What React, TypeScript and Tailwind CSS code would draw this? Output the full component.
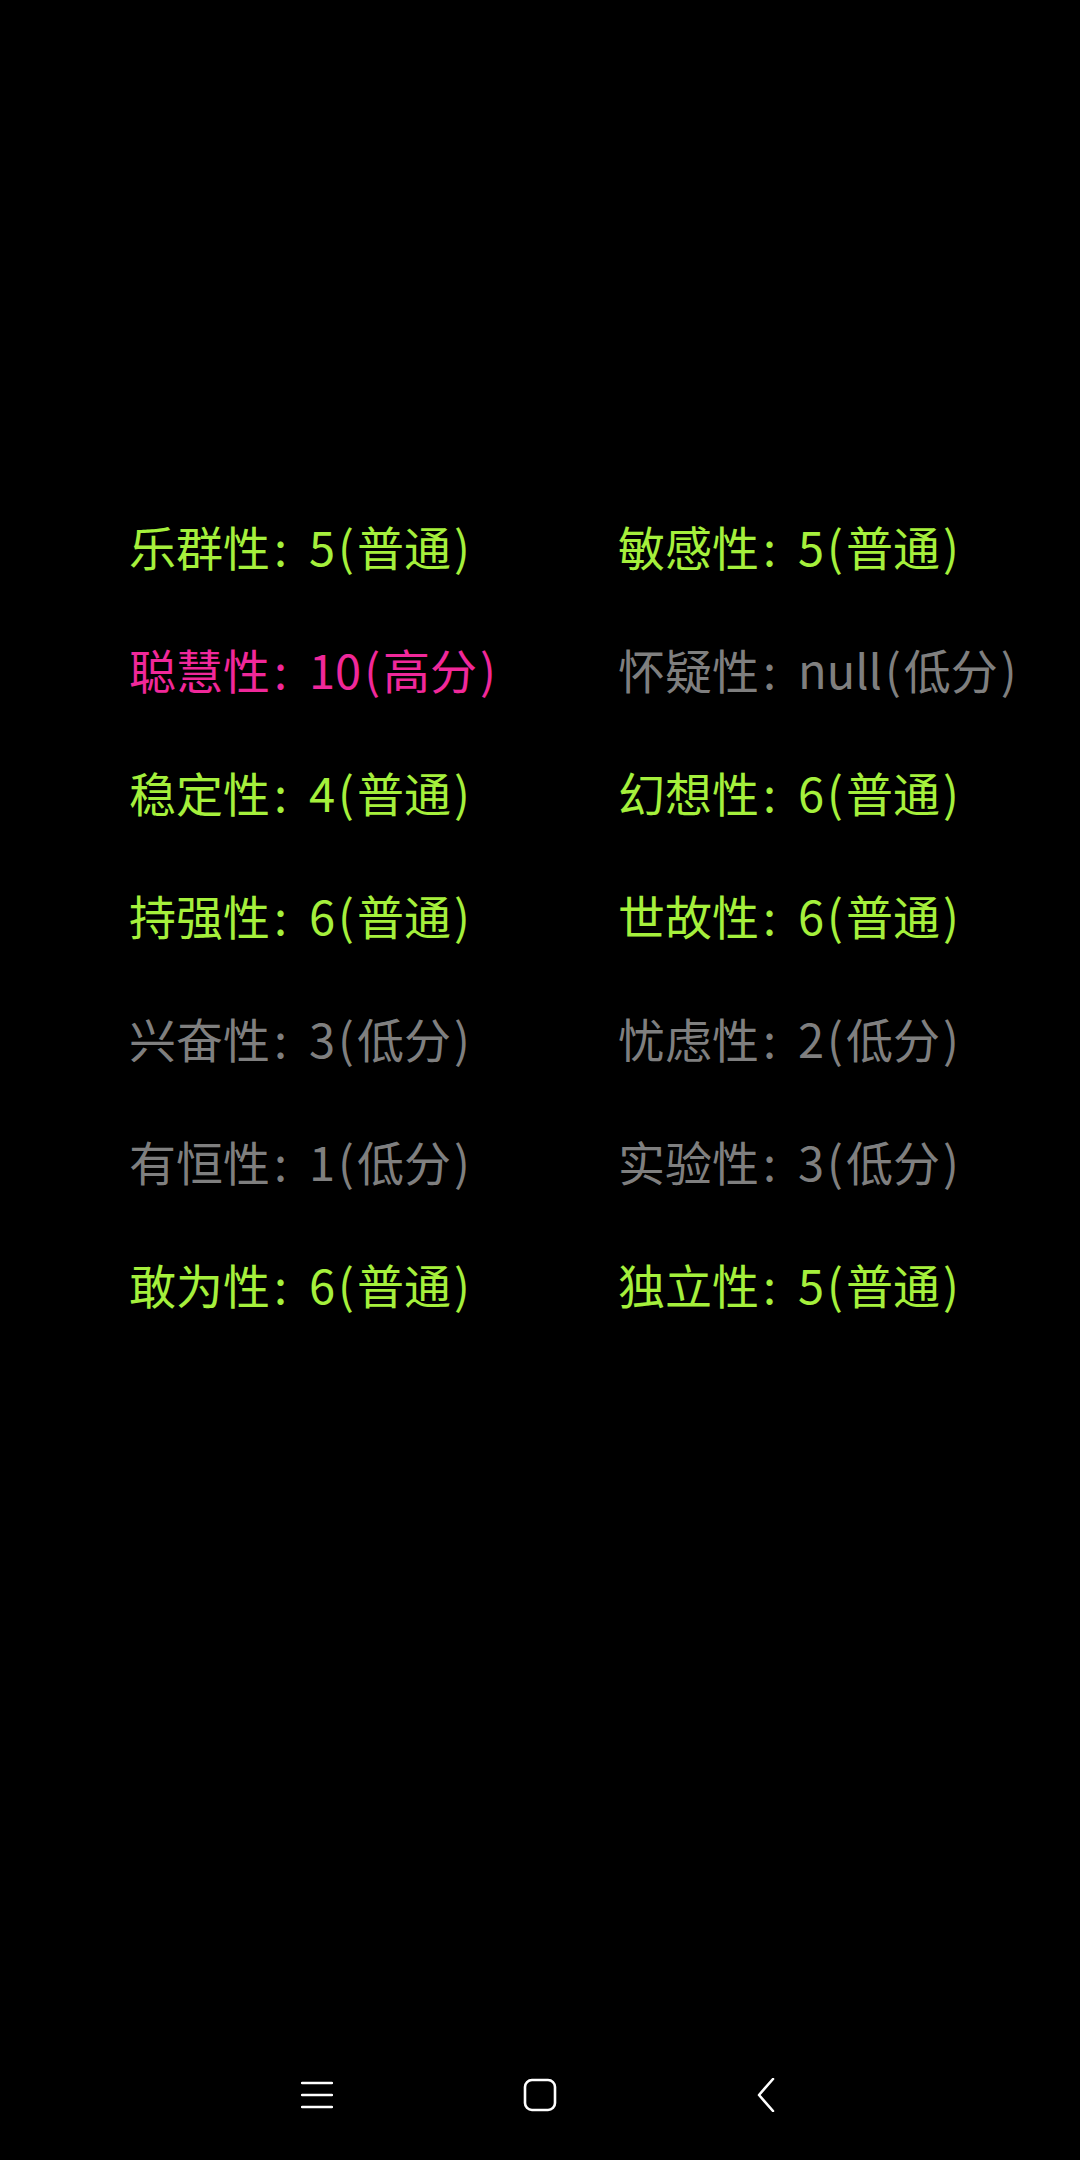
type Trait = { name: string; score: string; level: string };

const TRAITS: Trait[] = [
  { name: '乐群性', score: '5', level: '普通' },
  { name: '敏感性', score: '5', level: '普通' },
  { name: '聪慧性', score: '10', level: '高分' },
  { name: '怀疑性', score: 'null', level: '低分' },
  { name: '稳定性', score: '4', level: '普通' },
  { name: '幻想性', score: '6', level: '普通' },
  { name: '持强性', score: '6', level: '普通' },
  { name: '世故性', score: '6', level: '普通' },
  { name: '兴奋性', score: '3', level: '低分' },
  { name: '忧虑性', score: '2', level: '低分' },
  { name: '有恒性', score: '1', level: '低分' },
  { name: '实验性', score: '3', level: '低分' },
  { name: '敢为性', score: '6', level: '普通' },
  { name: '独立性', score: '5', level: '普通' },
];

const levelColor = (level: string) => {
  if (level === '高分') return 'text-[#f0289a]';
  if (level === '低分') return 'text-[#7f7f7f]';
  return 'text-[#a5f03c]';
};

export default function App() {
  return (
    <div
      className="w-[1080px] h-[2160px] bg-black flex flex-col"
      style={{ fontFamily: '"Noto Sans CJK SC", "Noto Sans", sans-serif' }}
    >
      <div className="flex-1 pt-[484px] pl-[129px]">
        <div className="grid grid-cols-[489px_1fr]">
          {TRAITS.map((t) => (
            <div
              key={t.name}
              className={`h-[123px] leading-[123px] text-[47px] whitespace-nowrap ${levelColor(t.level)}`}
            >
              {t.name}
              <span className="inline-block w-[39px] pl-[4px]">:</span>
              {t.score}
              <span className="px-[3px]">(</span>
              {t.level}
              <span className="px-[3px]">)</span>
            </div>
          ))}
        </div>
      </div>

      {/* nav bar */}
      <div className="h-[128px] flex items-center pl-[287px] text-white pb-[2px]">
        <div className="w-[60px] flex justify-center">
          <svg width="32" height="28" viewBox="0 0 32 28" fill="none">
            <path d="M1 2 H31 M1 14 H31 M1 26 H31" stroke="white" strokeWidth="2.4" strokeLinecap="round" />
          </svg>
        </div>
        <div className="w-[60px] ml-[163px] flex justify-center">
          <svg width="34" height="34" viewBox="0 0 34 34" fill="none">
            <rect x="2" y="2" width="30" height="30" rx="7" stroke="white" strokeWidth="2.6" />
          </svg>
        </div>
        <div className="w-[60px] ml-[166px] flex justify-center">
          <svg width="20" height="34" viewBox="0 0 20 34" fill="none">
            <path d="M17 1 L3 17 L17 33" stroke="white" strokeWidth="2.6" strokeLinecap="round" strokeLinejoin="round" />
          </svg>
        </div>
      </div>
    </div>
  );
}
